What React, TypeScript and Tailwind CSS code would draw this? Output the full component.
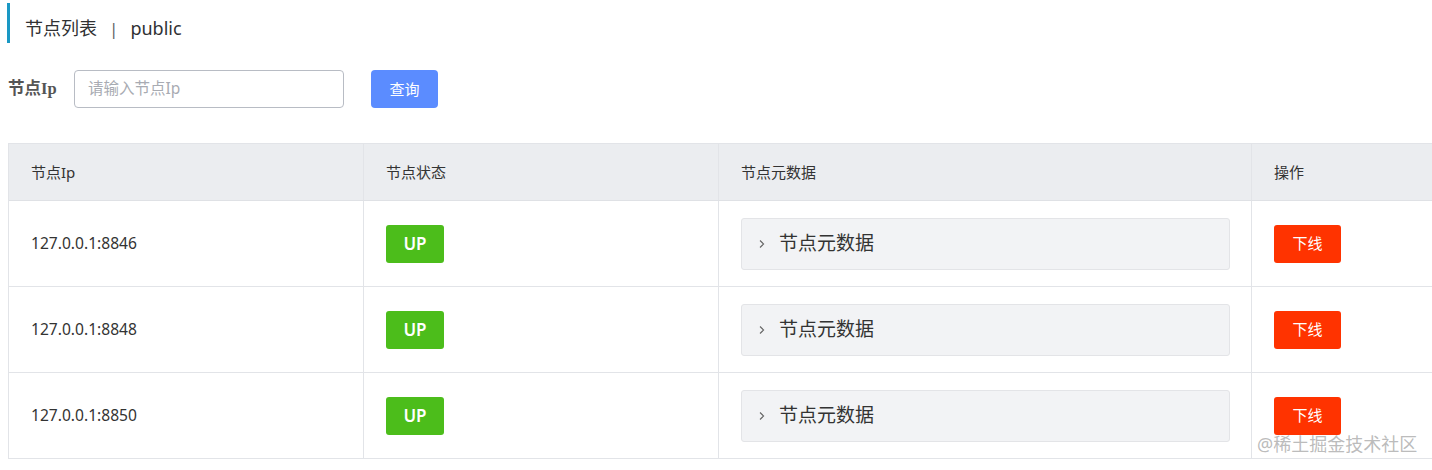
import React from "react";

const rows = ["127.0.0.1:8846", "127.0.0.1:8848", "127.0.0.1:8850"];

const sans = "font-['Noto_Sans','Noto_Sans_CJK_SC',sans-serif]";

function Chevron() {
  return (
    <svg width="10" height="10" viewBox="0 0 10 10" className="shrink-0">
      <path d="M3 1.5 L6.6 5 L3 8.5" fill="none" stroke="#666" strokeWidth="1.1" />
    </svg>
  );
}

export default function App() {
  return (
    <div className={`relative w-[1432px] h-[470px] overflow-hidden bg-white ${sans}`}>
      {/* title */}
      <div className="flex items-center h-[40px] mt-[3px] ml-[7px] border-l-[3px] border-[#1a98c4] pl-[15px] pt-[10px]">
        <span className="text-[18px] text-[#303133] leading-none">节点列表</span>
        <span className="text-[17px] text-[#606266] leading-none mx-[12px]">|</span>
        <span className="text-[18px] text-[#303133] leading-none">public</span>
      </div>

      {/* filter */}
      <div className="flex items-center mt-[27px] ml-[8px] h-[38px]">
        <span className="font-['Liberation_Serif','Noto_Sans_CJK_SC',serif] font-bold text-[16.5px] text-[#555] w-[66px]">
          节点Ip
        </span>
        <div className="w-[270px] h-[38px] border border-[#b8bcc4] rounded-[4px] flex items-center px-[13px]">
          <span className="text-[15.5px] text-[#a8abb2]">请输入节点Ip</span>
        </div>
        <button className="ml-[27px] w-[67px] h-[38px] rounded-[4px] bg-[#5b8cff] text-white text-[15px] flex items-center justify-center">
          查询
        </button>
      </div>

      {/* table */}
      <div className="mt-[35px] ml-[8px] w-[1440px] border-l border-t border-[#e2e4e8]">
        <div className="grid grid-cols-[355px_355px_533px_197px] h-[57px] bg-[#ebedf0] border-b border-[#dfe1e5]">
          {["节点Ip", "节点状态", "节点元数据", "操作"].map((h, i) => (
            <div
              key={h}
              className={`flex items-center pl-[22px] pt-[1px] text-[15px] text-[#333] ${i < 3 ? "border-r border-[#e2e4e8]" : ""}`}
            >
              {h}
            </div>
          ))}
        </div>
        {rows.map((ip) => (
          <div key={ip} className="grid grid-cols-[355px_355px_533px_197px] h-[86px] border-b border-[#e2e4e8]">
            <div className="flex items-center pl-[22px] text-[15.6px] text-[#333] border-r border-[#e2e4e8]">{ip}</div>
            <div className="flex items-center pl-[22px] border-r border-[#e2e4e8]">
              <div className="w-[58px] h-[38px] rounded-[3px] bg-[#4cbd1b] text-white font-semibold text-[17px] flex items-center justify-center">
                UP
              </div>
            </div>
            <div className="flex items-center pl-[22px] pr-[21px] border-r border-[#e2e4e8]">
              <div className="w-full h-[52px] bg-[#f2f3f5] border border-[#e3e4e7] rounded-[3px] flex items-center pl-[15px] gap-[12px]">
                <Chevron />
                <span className="text-[19px] text-[#333]">节点元数据</span>
              </div>
            </div>
            <div className="flex items-center pl-[22px]">
              <div className="w-[67px] h-[38px] rounded-[3px] bg-[#ff3300] text-white text-[15px] flex items-center justify-center">
                下线
              </div>
            </div>
          </div>
        ))}
      </div>

      {/* watermark */}
      <div className="absolute left-[1257px] top-[431px] text-[18px] text-[#aaaaaa]/80 leading-[26px]">
        @稀土掘金技术社区
      </div>
    </div>
  );
}
